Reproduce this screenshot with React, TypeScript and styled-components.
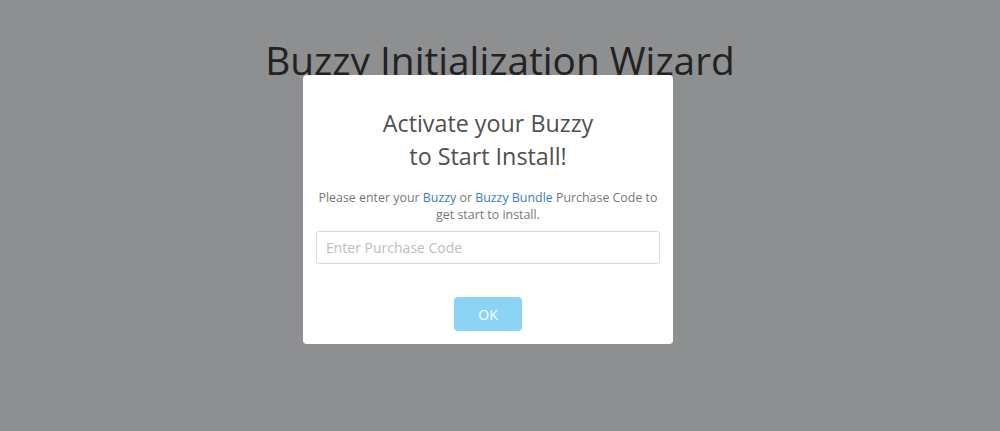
import React from 'react';
import styled, { createGlobalStyle } from 'styled-components';

const GlobalStyle = createGlobalStyle`
  html, body {
    margin: 0;
    padding: 0;
    background: #8e8f91;
    font-family: "Open Sans", "Liberation Sans", sans-serif;
  }
`;

const Page = styled.div`
  width: 1000px;
  height: 431px;
  position: relative;
  overflow: hidden;
`;

const PageTitle = styled.h1`
  margin: 0;
  padding-top: 34px;
  text-align: center;
  font-size: 38.8px;
  font-weight: 400;
  line-height: 52px;
  color: #222222;
`;

const Modal = styled.div`
  position: absolute;
  left: 303px;
  top: 75px;
  width: 370px;
  height: 269px;
  box-sizing: border-box;
  background: #ffffff;
  border-radius: 4px;
  padding: 32px 13px 0;
  display: flex;
  flex-direction: column;
  align-items: center;
`;

const Heading = styled.h2`
  margin: 0;
  font-size: 23.3px;
  font-weight: 400;
  line-height: 33px;
  color: #505050;
  text-align: center;
`;

const Text = styled.p`
  margin: 16px 0 0;
  font-size: 12.4px;
  line-height: 17px;
  color: #777777;
  text-align: center;
`;

const Highlight = styled.span`
  color: #3b7ec0;
`;

const CodeInput = styled.input`
  margin-top: 8px;
  width: 100%;
  height: 33px;
  box-sizing: border-box;
  border: 1px solid #d7d7d7;
  border-radius: 3px;
  padding: 0 9px;
  font-family: inherit;
  font-size: 14px;
  color: #555555;
  outline: none;

  &::placeholder {
    color: #bdbdbd;
  }
`;

const OkButton = styled.button`
  margin-top: 33px;
  width: 68px;
  height: 34px;
  border: none;
  border-radius: 4px;
  background: #8cd4f5;
  color: #ffffff;
  font-family: inherit;
  font-size: 14px;
  cursor: pointer;
`;

export default function App() {
  return (
    <>
      <GlobalStyle />
      <Page>
        <PageTitle>Buzzy Initialization Wizard</PageTitle>
        <Modal>
          <Heading>
            Activate your Buzzy
            <br />
            to Start Install!
          </Heading>
          <Text>
            Please enter your <Highlight>Buzzy</Highlight> or <Highlight>Buzzy Bundle</Highlight> Purchase Code to
            get start to install.
          </Text>
          <CodeInput placeholder="Enter Purchase Code" />
          <OkButton>OK</OkButton>
        </Modal>
      </Page>
    </>
  );
}
